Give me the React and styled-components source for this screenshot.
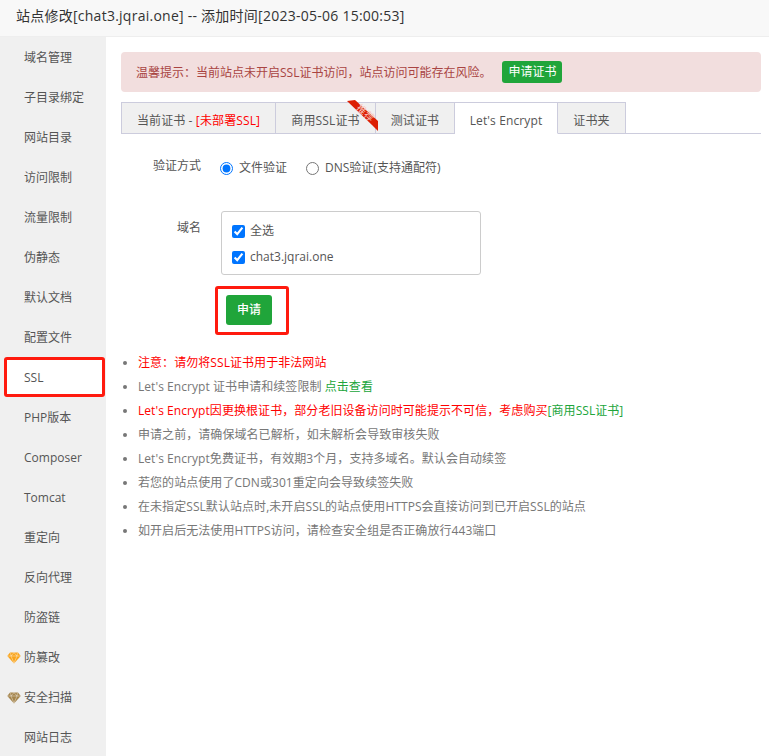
import React from 'react';
import styled, { createGlobalStyle } from 'styled-components';

const menu = [
  { label: '域名管理' },
  { label: '子目录绑定' },
  { label: '网站目录' },
  { label: '访问限制' },
  { label: '流量限制' },
  { label: '伪静态' },
  { label: '默认文档' },
  { label: '配置文件' },
  { label: 'SSL', active: true },
  { label: 'PHP版本' },
  { label: 'Composer' },
  { label: 'Tomcat' },
  { label: '重定向' },
  { label: '反向代理' },
  { label: '防盗链' },
  { label: '防篡改', gem: '#f9a41c' },
  { label: '安全扫描', gem: '#a5854d' },
  { label: '网站日志' },
];

function Gem({ color }) {
  return (
    <GemIcon viewBox="0 0 14 12">
      <path d="M3 0.5h8l2.7 3.4L7 11.5.3 3.9z" fill={color} />
      <path d="M.8 4h12.4M4 4l3 7 3-7M3.5 .8L4 4l3-3.4L10 4l.5-3.2" fill="none" stroke="#fff" strokeOpacity=".55" strokeWidth=".7" />
    </GemIcon>
  );
}

export default function App() {
  return (
    <>
      <GlobalStyle />
      <Page>
        <Header>站点修改[chat3.jqrai.one] -- 添加时间[2023-05-06 15:00:53]</Header>
        <Body>
          <Sidebar>
            {menu.map((item) => (
              <MenuItem key={item.label} $active={item.active}>
                {item.gem && <Gem color={item.gem} />}
                {item.label}
              </MenuItem>
            ))}
          </Sidebar>
          <Main>
            <Alert>
              温馨提示：当前站点未开启SSL证书访问，站点访问可能存在风险。
              <AlertButton>申请证书</AlertButton>
            </Alert>
            <Tabs>
              <Tab $w={155}>当前证书 - <Red>[未部署SSL]</Red></Tab>
              <Tab $w={100}>
                商用SSL证书
                <Ribbon viewBox="0 0 31 31">
                  <path d="M0 1L8 0L31 21V31L25 25Z" fill="#dc1f04" />
                  <text x="16" y="15.5" fontSize="10" fill="#f6c9c0" transform="rotate(42 16 15.5)" textAnchor="middle">推荐</text>
                </Ribbon>
              </Tab>
              <Tab $w={79}>测试证书</Tab>
              <Tab $w={103} $active>Let's Encrypt</Tab>
              <Tab $w={68}>证书夹</Tab>
            </Tabs>
            <MethodRow>
              <MethodLabel>验证方式</MethodLabel>
              <Option><Radio defaultChecked name="method" type="radio" />文件验证</Option>
              <Option><Radio name="method" type="radio" />DNS验证(支持通配符)</Option>
            </MethodRow>
            <DomainRow>
              <DomainLabel>域名</DomainLabel>
              <DomainBox>
                <Option><Check defaultChecked type="checkbox" />全选</Option>
                <Option><Check defaultChecked type="checkbox" />chat3.jqrai.one</Option>
              </DomainBox>
            </DomainRow>
            <SubmitFrame><Submit>申请</Submit></SubmitFrame>
            <Notes>
              <Note $c="#ff0000">注意：请勿将SSL证书用于非法网站</Note>
              <Note>Let's Encrypt 证书申请和续签限制 <Green>点击查看</Green></Note>
              <Note $c="#ff0000">Let's Encrypt因更换根证书，部分老旧设备访问时可能提示不可信，考虑购买<Green>[商用SSL证书]</Green></Note>
              <Note>申请之前，请确保域名已解析，如未解析会导致审核失败</Note>
              <Note>Let's Encrypt免费证书，有效期3个月，支持多域名。默认会自动续签</Note>
              <Note>若您的站点使用了CDN或301重定向会导致续签失败</Note>
              <Note>在未指定SSL默认站点时,未开启SSL的站点使用HTTPS会直接访问到已开启SSL的站点</Note>
              <Note>如开启后无法使用HTTPS访问，请检查安全组是否正确放行443端口</Note>
            </Notes>
          </Main>
        </Body>
      </Page>
    </>
  );
}

const GlobalStyle = createGlobalStyle`
  html, body {
    margin: 0;
    padding: 0;
    background: #fff;
    overflow: hidden;
  }
  * {
    box-sizing: border-box;
  }
`;
const Page = styled.div`
  width: 769px;
  height: 756px;
  overflow: hidden;
  font-family: 'Open Sans', 'Noto Sans CJK SC', sans-serif;
  font-size: 12px;
  color: #555;
`;
const Header = styled.div`
  height: 37px;
  padding-left: 16px;
  line-height: 32px;
  font-size: 14px;
  letter-spacing: 0.25px;
  color: #333;
  background: #f8f8f8;
  border-bottom: 1px solid #eee;
`;
const Body = styled.div`
  display: flex;
  height: 719px;
`;
const Sidebar = styled.div`
  width: 106px;
  flex-shrink: 0;
  background: #f0f0f0;
`;
const MenuItem = styled.div`
  position: relative;
  height: 40px;
  line-height: ${(p) => (p.$active ? '36px' : '41px')};
  padding-left: ${(p) => (p.$active ? '17px' : '24px')};
  color: #555;
  ${(p) => p.$active && `
    background: #fff;
    width: 101px;
    margin-left: 4px;
    border: 3px solid #ff1a0e;
    border-radius: 3px;
  `}
`;
const GemIcon = styled.svg`
  position: absolute;
  left: 7px;
  top: 15px;
  width: 14px;
  height: 12px;
`;
const Main = styled.div`
  flex: 1;
  padding: 15px 8px 0 15px;
`;
const Alert = styled.div`
  height: 40px;
  padding-left: 15px;
  display: flex;
  align-items: center;
  color: #a94442;
  background: #f2dede;
  border-radius: 4px;
`;
const AlertButton = styled.span`
  margin-left: 11px;
  padding: 0 6px;
  height: 22px;
  line-height: 22px;
  color: #fff;
  background: #20a53a;
  border-radius: 3px;
`;
const Tabs = styled.div`
  display: flex;
  height: 32px;
  margin-top: 10px;
  border-bottom: 1px solid #ccd;
`;
const Tab = styled.div`
  position: relative;
  flex: 0 0 ${(p) => p.$w}px;
  height: 32px;
  text-align: center;
  line-height: 35px;
  letter-spacing: 0.12px;
  background: ${(p) => (p.$active ? '#fff' : '#f0f0f0')};
  border: 1px solid #ccd;
  border-bottom: ${(p) => (p.$active ? '1px solid #fff' : '1px solid #ccd')};
  border-left: 0;
  &:first-child {
    border-left: 1px solid #ccd;
  }
`;
const Red = styled.span`
  color: #ff0000;
`;
const Green = styled.span`
  color: #20a53a;
`;
const Ribbon = styled.svg`
  position: absolute;
  z-index: 1;
  right: -3px;
  top: -3px;
  width: 31px;
  height: 31px;
`;
const MethodRow = styled.div`
  display: flex;
  align-items: center;
  gap: 19px;
  height: 20px;
  margin-top: 24px;
`;
const MethodLabel = styled.div`
  width: 80px;
  text-align: right;
  position: relative;
  top: -3px;
`;
const DomainLabel = styled.div`
  width: 80px;
  margin-top: 7px;
  text-align: right;
`;
const Option = styled.label`
  display: flex;
  align-items: center;
  gap: 6px;
  line-height: 20px;
`;
const Radio = styled.input`
  width: 13px;
  height: 13px;
  margin: 0;
`;
const Check = styled.input`
  width: 13px;
  height: 13px;
  margin: 0 -1px 0 0;
`;
const DomainRow = styled.div`
  display: flex;
  align-items: flex-start;
  gap: 20px;
  margin-top: 33px;
`;
const DomainBox = styled.div`
  width: 260px;
  height: 64px;
  padding: 9px 10px;
  display: flex;
  flex-direction: column;
  gap: 6px;
  border: 1px solid #ccc;
  border-radius: 3px;
`;
const SubmitFrame = styled.div`
  width: 74px;
  height: 49px;
  margin: 11px 0 0 94px;
  padding: 6px 0 0 8px;
  border: 3px solid #ff1a0e;
  border-radius: 3px;
`;
const Submit = styled.div`
  width: 46px;
  height: 30px;
  line-height: 30px;
  text-align: center;
  color: #fff;
  font-weight: 500;
  background: #20a53a;
  border-radius: 3px;
`;
const Notes = styled.ul`
  margin: 16px 0 0;
  padding: 0 0 0 17px;
  list-style: disc;
`;
const Note = styled.li`
  height: 24px;
  line-height: 24px;
  letter-spacing: 0.06px;
  color: ${(p) => p.$c || '#777'};
  &::marker {
    color: #777;
  }
`;
